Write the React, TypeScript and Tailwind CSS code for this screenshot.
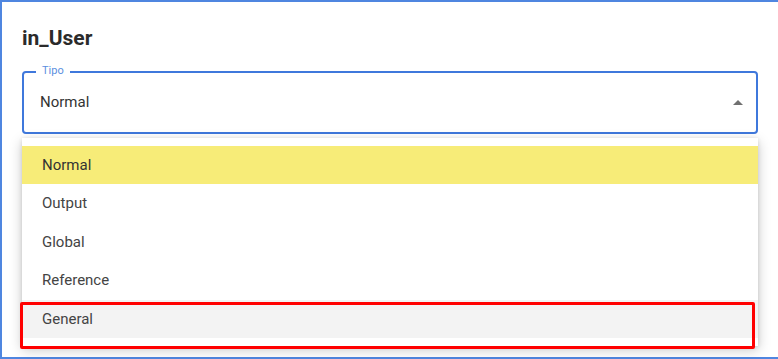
const options = ["Normal", "Output", "Global", "Reference", "General"];

const ArrowUp = () => (
  <svg viewBox="0 0 24 24" className="h-6 w-6 fill-[#707070]">
    <path d="M7 14l5-5 5 5z" />
  </svg>
);

export default function App() {
  return (
    <div className="h-[359px] w-[778px] overflow-hidden bg-white font-['Roboto',sans-serif]">
      <div className="h-[359px] w-full border-l-2 border-t-2 border-b-2 border-[#4f86e0] pl-5 pt-6">
        {/* Title */}
        <h1 className="text-[21px] leading-6 font-bold text-[#2b2b2b]">in_User</h1>

        {/* Outlined select */}
        <div className="relative mt-[21px] flex h-[63px] w-[736px] items-center justify-between rounded-[4px] border-2 border-[#3f78dc] pl-4 pr-[6px]">
          <span className="absolute left-3 top-[-10px] bg-white px-[6px] text-[11px] leading-4 text-[#5b8fe0]">
            Tipo
          </span>
          <span className="text-[15px] text-[#333333]">Normal</span>
          <ArrowUp />
        </div>

        {/* Menu */}
        <div className="relative mt-1 w-[736px] bg-white py-2 shadow-[0_4px_12px_rgba(0,0,0,0.22),0_1px_4px_rgba(0,0,0,0.12)]">
          {options.map((opt, i) => (
            <div
              key={opt}
              className={
                i === 0
                  ? "flex h-[38.4px] items-center bg-[#f7ec78] pl-5 text-[15px] text-[#333333]"
                  : i === 4
                  ? "flex h-[38.4px] items-center bg-[#f3f3f3] pl-5 text-[15px] text-[#444444]"
                  : "flex h-[38.4px] items-center pl-5 text-[15px] text-[#444444]"
              }
            >
              {opt}
            </div>
          ))}
          {/* highlight box */}
          <div className="absolute left-[-2px] top-[164px] h-[47px] w-[735px] rounded-[2px] border-[3px] border-[#ff0000]" />
        </div>
      </div>
    </div>
  );
}
